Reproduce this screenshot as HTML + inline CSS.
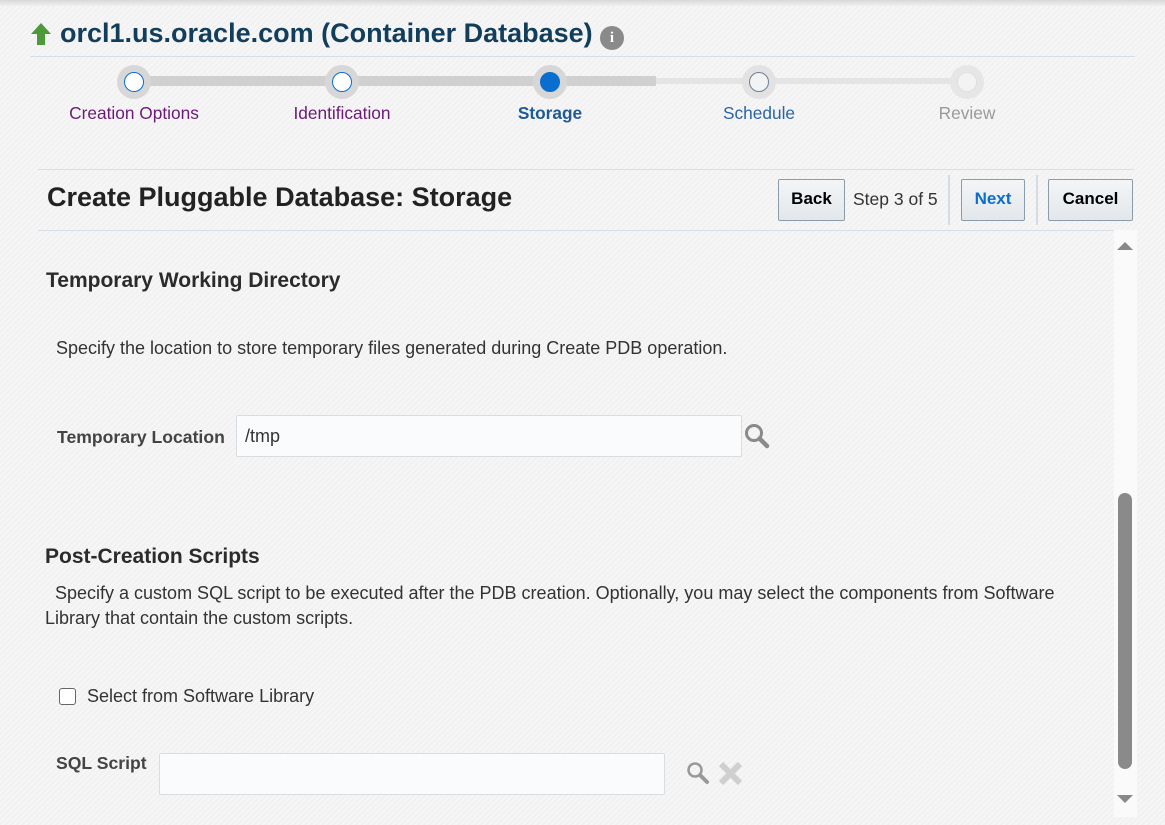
<!DOCTYPE html>
<html><head><meta charset="utf-8"><style>
*{margin:0;padding:0;box-sizing:border-box}
body{width:1165px;height:825px;overflow:hidden;background:#f4f4f4;font-family:"Liberation Sans",Arial,sans-serif;position:relative;
background-image:repeating-linear-gradient(135deg,#f6f6f6 0,#f6f6f6 2px,#f1f1f1 2px,#f1f1f1 4px)}
.a{position:absolute;white-space:nowrap}
.hl{position:absolute;height:1px;background:#d6dfe8}
.btn{position:absolute;height:42px;border:1px solid #8a9bab;border-radius:2px;background:linear-gradient(#f3f5f7,#e3e7eb);font-weight:bold;font-size:17px;text-align:center;line-height:38px;color:#000}
.circ{position:absolute;width:34px;height:34px;border-radius:50%;background:#d7d7d7}
.circ i{position:absolute;left:7px;top:7px;width:20px;height:20px;border-radius:50%;border:1.5px solid #0a6ed1;background:#fff}
.lab{position:absolute;font-size:17.3px;text-align:center;width:200px}
.inp{position:absolute;background:#fafbfd;border:1px solid #d9dde2;border-radius:2px}
</style></head><body>
<div class="a" style="left:0;top:0;width:1165px;height:6px;background:linear-gradient(#d8d8d8,#f0f0f0)"></div>
<svg class="a" style="left:29px;top:22px" width="24" height="24" viewBox="0 0 24 24"><path d="M12 1 L22 12 H16 V23 H8 V12 H2 Z" fill="#4e9a3b"/></svg>
<div class="a" style="left:60px;top:18px;font-size:27px;font-weight:bold;color:#123e5c">orcl1.us.oracle.com (Container Database)</div>
<div class="a" style="left:600px;top:26px;width:24px;height:24px;border-radius:50%;background:#8a8a8a;color:#fff;font:bold 15px 'Liberation Serif',serif;text-align:center;line-height:24px">i</div>
<div class="hl" style="left:30px;top:56px;width:1105px"></div>

<div class="a" style="left:134px;top:76px;width:522px;height:10px;background:#d0d0d0"></div>
<div class="a" style="left:656px;top:78px;width:312px;height:6px;background:#e4e4e4"></div>
<div class="circ" style="left:117px;top:65px"><i></i></div>
<div class="circ" style="left:325px;top:65px"><i></i></div>
<div class="circ" style="left:533px;top:65px"><i style="background:#0a6ed1;border-color:#0a6ed1"></i></div>
<div class="circ" style="left:742px;top:65px;background:#e2e2e2"><i style="border-color:#6d8092;background:#f1f3f5"></i></div>
<div class="circ" style="left:950px;top:65px;background:#e6e6e6"><i style="border-color:#e0e0e0;background:#f3f3f3"></i></div>
<div class="lab" style="left:34px;top:103px;color:#6b1a78">Creation Options</div>
<div class="lab" style="left:242px;top:103px;color:#6b1a78">Identification</div>
<div class="lab" style="left:450px;top:103px;color:#1e5a93;font-weight:bold">Storage</div>
<div class="lab" style="left:659px;top:103px;color:#2a64a6">Schedule</div>
<div class="lab" style="left:867px;top:103px;color:#9a9a9a">Review</div>

<div class="hl" style="left:38px;top:169px;width:1096px"></div>
<div class="a" style="left:47px;top:182px;font-size:27px;font-weight:bold;color:#222">Create Pluggable Database: Storage</div>
<div class="btn" style="left:778px;top:179px;width:67px">Back</div>
<div class="a" style="left:853px;top:189px;font-size:17.5px;color:#333">Step 3 of 5</div>
<div class="a" style="left:948px;top:175px;width:2px;height:50px;background:#d3dbe3"></div>
<div class="btn" style="left:961px;top:179px;width:64px;color:#0a6ed1">Next</div>
<div class="a" style="left:1036px;top:175px;width:2px;height:50px;background:#d3dbe3"></div>
<div class="btn" style="left:1048px;top:179px;width:85px">Cancel</div>
<div class="hl" style="left:38px;top:230px;width:1076px"></div>

<div class="a" style="left:1114px;top:230px;width:23px;height:587px;background:#fafafa"></div>
<div class="a" style="left:1117px;top:242px;width:0;height:0;border-left:8px solid transparent;border-right:8px solid transparent;border-bottom:8px solid #888"></div>
<div class="a" style="left:1117px;top:795px;width:0;height:0;border-left:8px solid transparent;border-right:8px solid transparent;border-top:8px solid #888"></div>
<div class="a" style="left:1118px;top:493px;width:14px;height:276px;border-radius:7px;background:#8a8a8a"></div>

<div class="a" style="left:46px;top:269px;font-size:21px;font-weight:bold;color:#2b2b2b">Temporary Working Directory</div>
<div class="a" style="left:56px;top:338px;font-size:18px;color:#333">Specify the location to store temporary files generated during Create PDB operation.</div>
<div class="a" style="left:57px;top:427px;font-size:17.6px;font-weight:bold;color:#444">Temporary Location</div>
<div class="inp" style="left:236px;top:415px;width:506px;height:42px"></div>
<div class="a" style="left:245px;top:426px;font-size:18px;color:#333">/tmp</div>
<svg class="a" style="left:743px;top:422px" width="28" height="28" viewBox="0 0 28 28"><circle cx="11" cy="11" r="7.5" fill="none" stroke="#8a8a8a" stroke-width="3"/><path d="M16.5 16.5 L24 24" stroke="#8a8a8a" stroke-width="4.5" stroke-linecap="round"/></svg>

<div class="a" style="left:45px;top:545px;font-size:21px;font-weight:bold;color:#2b2b2b">Post-Creation Scripts</div>
<div class="a" style="left:45px;top:581px;font-size:18px;color:#333;line-height:25px;white-space:normal;width:1030px">&nbsp;&nbsp;Specify a custom SQL script to be executed after the PDB creation. Optionally, you may select the components from Software Library that contain the custom scripts.</div>
<div class="a" style="left:59px;top:688px;width:17px;height:17px;border:1.5px solid #666;border-radius:3px;background:#fff"></div>
<div class="a" style="left:87px;top:686px;font-size:18px;color:#333">Select from Software Library</div>
<div class="a" style="left:56px;top:753px;font-size:17.6px;font-weight:bold;color:#444">SQL Script</div>
<div class="inp" style="left:159px;top:753px;width:506px;height:42px"></div>
<svg class="a" style="left:685px;top:760px" width="28" height="28" viewBox="0 0 28 28"><circle cx="10" cy="10" r="6.5" fill="none" stroke="#999" stroke-width="2.5"/><path d="M15 15 L22 22" stroke="#999" stroke-width="4" stroke-linecap="round"/></svg>
<svg class="a" style="left:717px;top:760px" width="28" height="28" viewBox="0 0 28 28"><path d="M4 4 L23 23 M23 4 L4 23" stroke="#cfcfcf" stroke-width="6"/></svg>
</body></html>
